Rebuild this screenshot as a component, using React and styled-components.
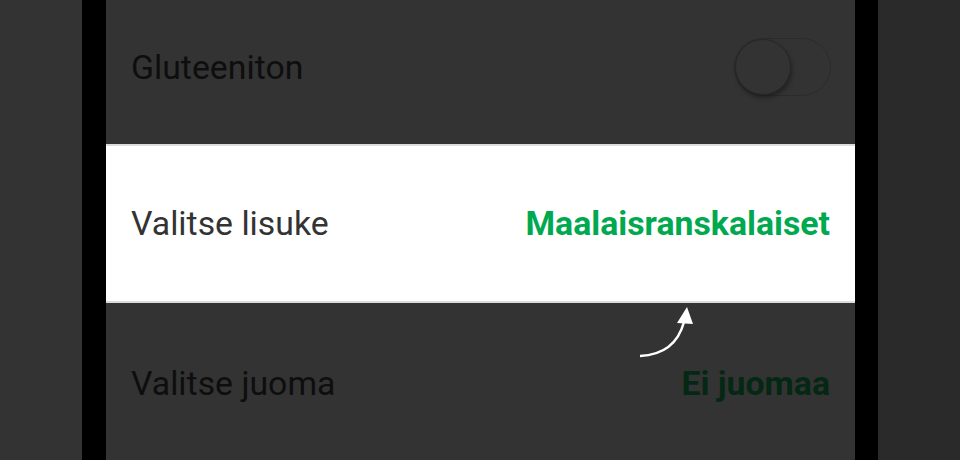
import React from 'react';
import styled, { createGlobalStyle } from 'styled-components';

const GlobalStyle = createGlobalStyle`
  html, body {
    margin: 0;
    padding: 0;
    background: #2a2a2a;
  }
  body {
    font-family: Roboto, 'Noto Sans', sans-serif;
  }
`;

const Page = styled.div`
  display: flex;
  width: 960px;
  height: 460px;
  overflow: hidden;
`;

const Gutter = styled.div`
  width: ${(p) => p.w}px;
  background: ${(p) => p.bg};
  flex: none;
`;

const Bezel = styled.div`
  width: ${(p) => p.w}px;
  background: #000;
  flex: none;
`;

const Screen = styled.div`
  position: relative;
  width: 749px;
  flex: none;
  display: flex;
  flex-direction: column;
  background: #333;
`;

const Row = styled.div`
  display: flex;
  align-items: center;
  justify-content: space-between;
  box-sizing: border-box;
  height: ${(p) => p.h}px;
  padding: 0 25px 0 25px;
  padding-bottom: ${(p) => p.pb || 0}px;
  flex: none;
`;

const Spotlight = styled(Row)`
  background: #fff;
  border-top: 2px solid #dcdcdc;
  border-bottom: 2px solid #dcdcdc;
`;

const Label = styled.span`
  font-size: 33.8px;
  color: ${(p) => (p.lit ? '#333' : '#0e0e0e')};
`;

const Value = styled.span`
  font-size: 33.8px;
  font-weight: 700;
  color: ${(p) => (p.lit ? '#00a94f' : '#052814')};
`;

const Track = styled.div`
  position: relative;
  width: 97px;
  height: 58px;
  box-sizing: border-box;
  border: 1px solid #2b2b2b;
  border-radius: 29px;
  margin-right: -1px;
`;

const Knob = styled.div`
  position: absolute;
  left: 0;
  top: 0;
  width: 56px;
  height: 56px;
  box-sizing: border-box;
  border-radius: 50%;
  background: #333;
  border: 1px solid #272727;
  box-shadow: 1px 3px 4px rgba(0, 0, 0, 0.35);
`;

const Arrow = styled.svg`
  position: absolute;
  left: 530px;
  top: 302px;
`;

export default function App() {
  return (
    <>
      <GlobalStyle />
      <Page>
        <Gutter w={82} bg="#333" />
        <Bezel w={24} />
        <Screen>
          <Row h={144} pb={10}>
            <Label>Gluteeniton</Label>
            <Track>
              <Knob />
            </Track>
          </Row>
          <Spotlight h={159}>
            <Label lit>Valitse lisuke</Label>
            <Value lit>Maalaisranskalaiset</Value>
          </Spotlight>
          <Row h={160}>
            <Label>Valitse juoma</Label>
            <Value>Ei juomaa</Value>
          </Row>
          <Arrow width="70" height="60" viewBox="0 0 70 60">
            <path d="M4 54 C 26 53, 42 42, 48 20" fill="none" stroke="#fff" strokeWidth="2.5" />
            <polygon points="51,5 41,21 57,22" fill="#fff" />
          </Arrow>
        </Screen>
        <Bezel w={23} />
        <Gutter w={82} bg="#2a2a2a" />
      </Page>
    </>
  );
}
